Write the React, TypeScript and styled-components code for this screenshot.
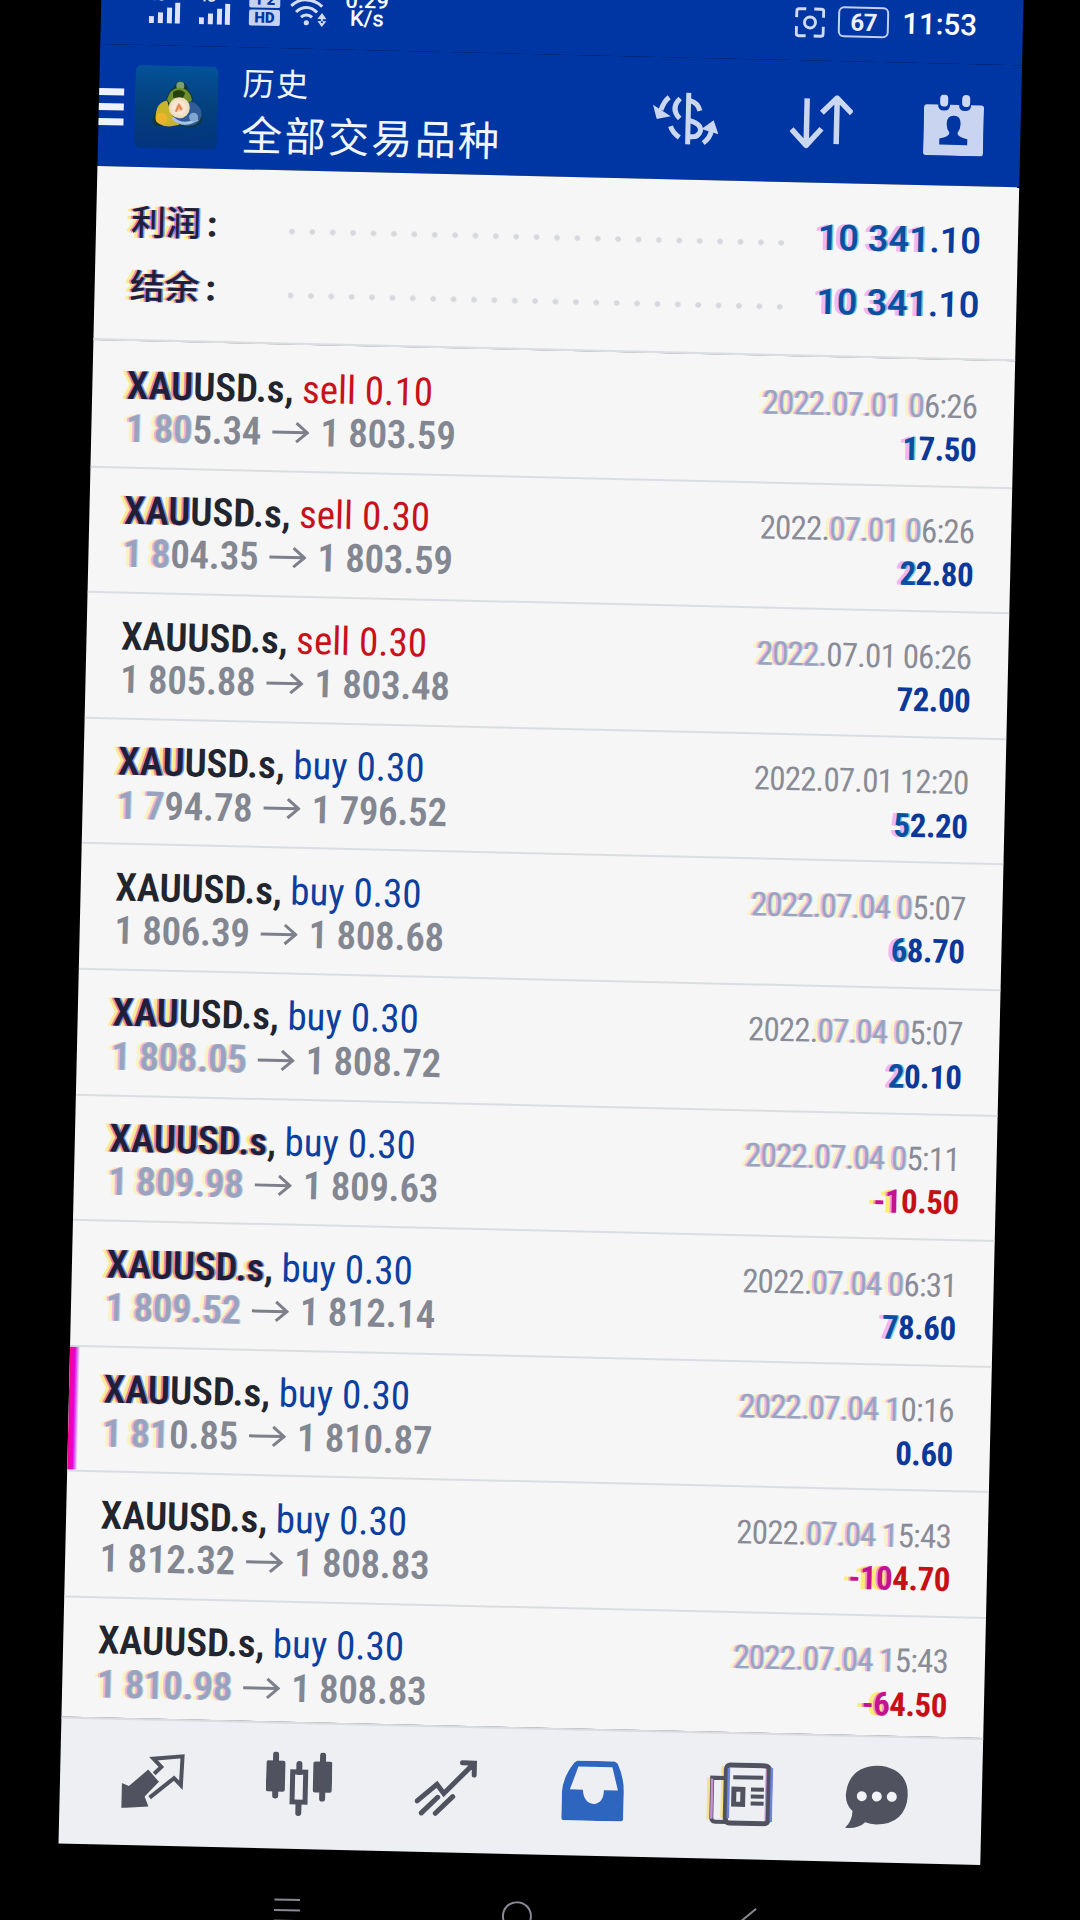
import React from "react";
import styled, { createGlobalStyle, css } from "styled-components";

const GlobalStyle = createGlobalStyle`
  * {
    box-sizing: border-box;
  }

  body {
    margin: 0;
    background: #000;
    font-family: Roboto, "Noto Sans CJK SC", sans-serif;
  }

  svg {
    display: block;
    flex: none;
  }
`;

const Page = styled.div`
  display: flex;
  width: 1080px;
  height: 1920px;
  overflow: hidden;
  background: #000;
`;

const Screen = styled.div`
  display: flex;
  flex-direction: column;
  flex: none;
  width: 922px;
  height: 2000px;
  margin: -30px 0 0 102.4px;
  transform: rotate(1.33deg);
  transform-origin: 0 0;
`;

const StatusBar = styled.div`
  display: flex;
  justify-content: space-between;
  align-items: flex-end;
  height: 74px;
  padding: 0 46px 22px 48px;
  background: #0036a3;
  color: #fff;
`;

const StatusGroup = styled.div<{ $gap: number }>`
  display: flex;
  align-items: flex-end;
  gap: ${(p) => p.$gap}px;
`;

const Signal = styled.div`
  display: flex;
  flex-direction: column;
  width: 32px;
  font-size: 13px;
  font-weight: 700;
  line-height: 11px;
  color: #e3e4fa;
`;

const VoiceBadge = styled.div`
  display: flex;
  flex-direction: column;
  gap: 2px;
  width: 31px;
`;

const VoiceCell = styled.span`
  height: 16px;
  border-radius: 2px;
  background: #c6d2f0;
  color: #0036a3;
  font-size: 15px;
  font-weight: 900;
  line-height: 16px;
  text-align: center;
`;

const Speed = styled.div`
  font-size: 22px;
  font-weight: 500;
  line-height: 18px;
  text-align: center;
`;

const Battery = styled.div`
  display: flex;
  align-items: center;
  justify-content: center;
  width: 51px;
  height: 31px;
  margin-bottom: 2px;
  border: 2.5px solid #c3cff0;
  border-radius: 6px;
  color: #eceefd;
  font-size: 24px;
  font-weight: 700;
  letter-spacing: -0.5px;
`;

const Clock = styled.span`
  margin-bottom: 1px;
  font-size: 29.5px;
  font-weight: 500;
  line-height: 31px;
`;

const AppBar = styled.header`
  display: flex;
  align-items: center;
  height: 122px;
  padding-right: 37px;
  background: #0036a3;
  color: #f1f5ff;
`;

const MenuButton = styled.div`
  display: flex;
  flex-direction: column;
  gap: 8px;
  width: 25px;
  margin: 3px 11px 0 0;
`;

const MenuLine = styled.span`
  height: 7px;
  background: #eef2fc;
`;

const Titles = styled.div`
  display: flex;
  flex-direction: column;
  flex: 1;
  padding: 0 0 1px 24px;
  font-family: "Noto Sans CJK SC", sans-serif;
  font-weight: 400;
  white-space: nowrap;
`;

const Subtitle = styled.span`
  font-size: 32px;
  letter-spacing: 2px;
  line-height: 49px;
`;

const Title = styled.span`
  font-size: 41px;
  letter-spacing: 2.4px;
  line-height: 52px;
`;

const Actions = styled.div`
  display: flex;
  align-items: center;
  gap: 71px;
`;

const Summary = styled.section`
  height: 174px;
  padding: 23px 37px 0 35px;
  background: #f6f6f7;
  border-bottom: 2px solid #dadde3;
`;

const SummaryRow = styled.div`
  display: flex;
  align-items: center;
  height: 64px;
`;

const SummaryLabel = styled.span`
  width: 158px;
  padding-bottom: 5px;
  color: #23252f;
  font-family: "Noto Sans CJK SC", sans-serif;
  font-size: 35px;
  font-weight: 500;
`;

const Colon = styled.b`
  padding-left: 6px;
  font-family: Roboto, sans-serif;
  font-weight: 900;
`;

const Dots = styled.div`
  flex: none;
  width: 500px;
  height: 6px;
  margin-top: 11px;
  background: radial-gradient(circle at 3px 3px, #d6d8de 2.4px, transparent 3.2px) 0 0 / 20.4px 6px repeat-x;
`;

const Amount = styled.span`
  margin-left: auto;
  color: #0b3c9d;
  font-size: 36px;
  font-weight: 600;
  white-space: nowrap;
`;

const List = styled.main`
  flex: none;
  height: 1377px;
  overflow: hidden;
  background: #f6f6f7;
`;

const Deal = styled.article<{ $marked?: boolean }>`
  height: 125.6px;
  padding: 20.5px 37px 0 34.5px;
  border-bottom: 2px solid #dadde3;
  font-family: "Roboto Condensed", Roboto, sans-serif;
  font-stretch: 75%;

  &:first-child {
    height: 127.6px;
    padding-top: 22.5px;
  }

  ${(p) =>
    p.$marked &&
    css`
      background: linear-gradient(90deg, #f5008c 0, #e800d8 5px, #d45cf5 7px, transparent 10px);
    `}
`;

const Line = styled.div`
  display: flex;
  align-items: baseline;
  height: 43.4px;
  font-size: 39px;
  line-height: 44px;
  white-space: pre;
`;

const Symbol = styled.span`
  color: #22252d;
  font-weight: 600;
  letter-spacing: -0.1px;
`;

const Side = styled.span<{ $sell: boolean }>`
  padding-left: 8.5px;
  color: ${(p) => (p.$sell ? "#c9111c" : "#0c3f9f")};
`;

const Price = styled.span`
  color: #838792;
  font-weight: 600;
  letter-spacing: -0.3px;
`;

const Time = styled.span`
  margin-left: auto;
  color: #898c96;
  font-size: 33px;
  letter-spacing: -0.85px;
`;

const Profit = styled.span<{ $loss: boolean }>`
  margin-left: auto;
  color: ${(p) => (p.$loss ? "#c60f16" : "#0b3899")};
  font-size: 33px;
  font-weight: 700;
  letter-spacing: -0.5px;
`;

const ArrowBox = styled.span`
  display: flex;
  align-self: center;
  padding: 0 11px 0 10px;
`;

// colour fringe that trails to the left of a run of characters
const fringes = {
  dark: css`
    color: #1f2038;
    text-shadow: 1.5px 0 rgba(30, 90, 230, 0.6), -2px 0 rgba(225, 30, 190, 0.5), -5px 0 rgba(255, 225, 40, 0.5);
  `,
  grey: css`
    color: #9aa3bd;
    text-shadow: 1px 0 rgba(120, 200, 225, 0.5), -2px 0 rgba(235, 140, 235, 0.6), -5px 0 rgba(255, 240, 120, 0.45);
  `,
  blue: css`
    color: #0c4fa0;
    text-shadow: 1.5px 0 rgba(0, 160, 180, 0.55), -4px 0 rgba(240, 140, 240, 0.6);
  `,
  red: css`
    color: #c4148c;
    text-shadow: -2px 0 rgba(240, 60, 200, 0.5), -6px 0 rgba(255, 230, 30, 0.6);
  `,
};

type Tone = keyof typeof fringes;

const Fringe = styled.span<{ $tone: Tone }>`
  ${(p) => fringes[p.$tone]}
`;

const TabBar = styled.nav`
  display: flex;
  flex: none;
  height: 126.5px;
  padding-left: 18.5px;
  background: #edeff3;
  border-top: 2px solid #d9dce0;
`;

const Tab = styled.div<{ $active?: boolean }>`
  display: flex;
  align-items: center;
  justify-content: center;
  width: 147px;
  padding-bottom: 4px;
  color: ${(p) => (p.$active ? "#2e66bf" : "#50535f")};

  &:last-child {
    width: 125px;
  }
`;

const SystemNav = styled.div`
  display: flex;
  gap: 202px;
  padding: 47px 0 0 217px;
  color: #8b8794;
`;

interface FringedProps {
  text: string;
  range: [number, number];
  tone: Tone;
}

const Fringed = ({ text, range: [from, to], tone }: FringedProps) => (
  <>
    {text.slice(0, from)}
    {to > from && <Fringe $tone={tone}>{text.slice(from, to)}</Fringe>}
    {text.slice(to)}
  </>
);

const SignalIcon = () => (
  <Signal>
    4G
    <svg width="32" height="22" viewBox="0 0 32 22" fill="#dfe2fa">
      <rect x="0" y="15" width="5" height="7" />
      <rect x="9" y="11" width="5" height="11" />
      <rect x="18" y="6" width="5" height="16" />
      <rect x="26" y="1" width="5" height="21" />
    </svg>
  </Signal>
);

const WifiIcon = () => (
  <svg width="37" height="30" viewBox="0 0 37 30" fill="none" stroke="#d4ddf6" strokeWidth="3">
    <path d="M1 9.5C9 1 23 1 32 9.5M6 15.5C12 9 21 9 27 15.5M11 20.500C14 17.500 19 17.500 22 20.500" />
    <circle cx="16.500" cy="26" r="2.600" fill="#d4ddf6" stroke="none" />
    <path d="M27.500 22l4.500-6 4.500 6zM27.500 24l4.500 6 4.500-6zM31 20h2v6h-2z" fill="#d4ddf6" stroke="none" />
  </svg>
);

const CaptureIcon = () => (
  <svg width="30" height="32" viewBox="0 -1 30 32" fill="none" stroke="#d0daf5" strokeWidth="3">
    <path d="M1.500 10V4Q1.500 1.500 4 1.500H11M19 1.500h7q2.500 0 2.500 2.500v6M28.500 19v7q0 2.500-2.500 2.500h-7M11 28.500H4q-2.500 0-2.500-2.500V19" />
    <circle cx="15" cy="15" r="5.500" />
  </svg>
);

const Logo = () => (
  <svg width="83" height="83" viewBox="0 0 83 83">
    <defs>
      <linearGradient id="tile" x1="0" y1="0" x2="0" y2="1">
        <stop offset="0" stopColor="#04529a" />
        <stop offset="0.5" stopColor="#04407c" />
        <stop offset="1" stopColor="#02347f" />
      </linearGradient>
      <radialGradient id="coin">
        <stop offset="0" stopColor="#f0a860" />
        <stop offset="0.45" stopColor="#fbe9dc" />
        <stop offset="1" stopColor="#e9d9b4" />
      </radialGradient>
    </defs>
    <rect width="83" height="83" rx="6" fill="url(#tile)" />
    <path d="M18 56q0-12 12-16 2-14 8-18 3-7 9-6 6 2 6 8 6 6 5 15 9 6 10 14-2 8-14 8l-15-4-14 4q-7 0-7-5z" fill="#12363f" />
    <circle cx="45" cy="20" r="4" fill="#7ba06a" />
    <path d="M32 34q3-12 13-12 10 1 12 12l-5 6H36z" fill="#6f8f2c" />
    <path d="M38 26q7-4 12 1l-2 5H38z" fill="#24420f" />
    <path d="M21 52q0-15 11-17l5 14 8 10-10 2q-12 0-14-9z" fill="#c9b42c" />
    <circle cx="27" cy="53" r="6" fill="#eab52a" />
    <path d="M55 35q11 3 12 13-1 11-13 12-9 0-14-8z" fill="#315d96" />
    <path d="M38 52q10 10 25 1" stroke="#a9c4e6" strokeWidth="3" fill="none" />
    <circle cx="59" cy="51" r="4.500" fill="#7fa6d2" />
    <circle cx="44.500" cy="42" r="10.500" fill="url(#coin)" />
    <path d="M41 46l3-7 3 5" stroke="#df8655" strokeWidth="2" fill="none" />
  </svg>
);

const CurrencyIcon = () => (
  <svg width="66" height="52" viewBox="0 0 66 52" fill="none" stroke="#cbd6f1" strokeWidth="5">
    <path d="M35.500 0v52" />
    <path d="M27 6q-10 10 0 20M37 8q8 2 10 10" />
    <path d="M18 34q2 6 9 11M37 28q12 3 11 10-2 7-11 6" />
    <path d="M16 5Q11 9 8 18" />
    <path d="M0 13l4 14 14-3z" fill="#cbd6f1" stroke="none" />
    <path d="M51 50q7-5 8-13" />
    <path d="M49 36l12-9 5 14z" fill="#cbd6f1" stroke="none" />
  </svg>
);

const SortIcon = () => (
  <svg width="63" height="54" viewBox="0 0 63 54" fill="none" stroke="#cbd6f1" strokeWidth="5.500" strokeLinejoin="round">
    <path d="M17 4v45M2 35l15 16 15-17M47 49V4M32 18L47 3l15 15" />
  </svg>
);

const CalendarIcon = () => (
  <svg width="60" height="61" viewBox="0 0 60 61">
    <path d="M3 10h11q0 6 6 6t6-6h9q0 6 6 6t6-6h10q3 0 3 3v45q0 3-3 3H3q-3 0-3-3V13q0-3 3-3z" fill="#c8d4f0" />
    <rect x="16" y="0" width="8" height="12" rx="4" fill="#cdd8f2" />
    <rect x="38" y="0" width="8" height="12" rx="4" fill="#cdd8f2" />
    <path d="M30 21q7 0 7 8 0 5-3 9 0 4 10 6v6H16v-6q10-2 10-6-3-4-3-9 0-8 7-8z" fill="#0036a3" />
  </svg>
);

const PriceArrow = () => (
  <svg width="38" height="22" viewBox="0 0 38 22" fill="none" stroke="#7d808b" strokeWidth="3">
    <path d="M1 11h34M25 1.500l11 9.500-11 9.500" />
  </svg>
);

const QuotesIcon = () => (
  <svg width="66" height="56" viewBox="0 0 66 56">
    <path d="M31 45l24-20 7 7 1-29-29 3 8 8-7 7" fill="none" stroke="currentColor" strokeWidth="4" />
    <path d="M29 17l11 12-14 15 4 10-27 2V31l7 3z" fill="currentColor" />
  </svg>
);

const CandlesIcon = () => (
  <svg width="66" height="64" viewBox="0 0 66 64">
    <g fill="currentColor">
      <rect x="0" y="9" width="19" height="31" rx="2" />
      <rect x="6.500" y="0" width="6" height="47" rx="3" />
      <rect x="47" y="9" width="19" height="31" rx="2" />
      <rect x="53.500" y="0" width="6" height="49" rx="3" />
      <rect x="30" y="9" width="6" height="14" rx="3" />
      <rect x="30" y="48" width="6" height="16" rx="3" />
    </g>
    <rect x="26.500" y="20" width="13" height="30" fill="none" stroke="currentColor" strokeWidth="5" />
  </svg>
);

const TrendIcon = () => (
  <svg width="62" height="57" viewBox="0 0 62 57" fill="none" stroke="currentColor" strokeWidth="5" strokeLinecap="round">
    <path d="M2.500 42L22 25l7 9L58 4M47 3h12v12M7 54l16-16M21 54l17-17" />
  </svg>
);

const InboxIcon = () => (
  <svg width="62" height="60" viewBox="0 0 62 60">
    <path
      d="M15 0h37l3 2q7 14 7 30v25q0 3-3 3H3q-3 0-3-3V32Q1 16 12 2zM16 6L8 29h13q1 13 11 14 10-1 10-14h14L50 6z"
      fill="currentColor"
      fillRule="evenodd"
    />
  </svg>
);

const NewsIcon = () => (
  <svg width="66" height="64" viewBox="0 0 66 64" fill="none">
    <path d="M1.500 16v42M15.500 4v52" stroke="#f7e08a" strokeWidth="3" />
    <path d="M17 16H5v40q0 4 4 4h12" stroke="currentColor" strokeWidth="4" />
    <path d="M5 17v40M59.500 6v53" stroke="#c98fd0" strokeWidth="2.500" />
    <rect x="19" y="3" width="43" height="58" rx="4" stroke="currentColor" strokeWidth="5" />
    <path d="M64.500 5v54M21.500 6v50" stroke="#6a83dc" strokeWidth="2.500" />
    <g stroke="currentColor">
      <path d="M26 15h30M44 27h13M44 34h13M44 41h13" strokeWidth="4" />
      <rect x="27" y="27" width="9" height="15" strokeWidth="5" />
    </g>
  </svg>
);

const ChatIcon = () => (
  <svg width="63" height="64" viewBox="0 0 63 64">
    <path d="M32 0q31 2 31 30-2 28-31 29-6 0-11-2Q14 64 1 63q7-7 7-17Q1 40 1 30 3 2 32 0z" fill="currentColor" />
    <g fill="#f2f3f6">
      <circle cx="17" cy="31" r="5" />
      <circle cx="32" cy="31" r="5" />
      <circle cx="47" cy="31" r="5" />
    </g>
  </svg>
);

interface DealData {
  side: "sell" | "buy";
  volume: string;
  open: string;
  close: string;
  time: string;
  profit: string;
  // fringed characters: symbol, open price, time (from, to), profit
  fringe: [number, number, number, number, number];
  marked?: boolean;
}

const deals: DealData[] = [
  { side: "sell", volume: "0.10", open: "1 805.34", close: "1 803.59", time: "2022.07.01 06:26", profit: "17.50", fringe: [3, 4, 0, 12, 1] },
  { side: "sell", volume: "0.30", open: "1 804.35", close: "1 803.59", time: "2022.07.01 06:26", profit: "22.80", fringe: [3, 3, 5, 12, 1] },
  { side: "sell", volume: "0.30", open: "1 805.88", close: "1 803.48", time: "2022.07.01 06:26", profit: "72.00", fringe: [0, 0, 0, 5, 0] },
  { side: "buy", volume: "0.30", open: "1 794.78", close: "1 796.52", time: "2022.07.01 12:20", profit: "52.20", fringe: [3, 3, 0, 0, 1] },
  { side: "buy", volume: "0.30", open: "1 806.39", close: "1 808.68", time: "2022.07.04 05:07", profit: "68.70", fringe: [0, 0, 0, 12, 1] },
  { side: "buy", volume: "0.30", open: "1 808.05", close: "1 808.72", time: "2022.07.04 05:07", profit: "20.10", fringe: [3, 8, 5, 12, 1] },
  { side: "buy", volume: "0.30", open: "1 809.98", close: "1 809.63", time: "2022.07.04 05:11", profit: "-10.50", fringe: [8, 8, 0, 12, 2] },
  { side: "buy", volume: "0.30", open: "1 809.52", close: "1 812.14", time: "2022.07.04 06:31", profit: "78.60", fringe: [8, 8, 5, 12, 1] },
  { side: "buy", volume: "0.30", open: "1 810.85", close: "1 810.87", time: "2022.07.04 10:16", profit: "0.60", fringe: [3, 4, 0, 12, 0], marked: true },
  { side: "buy", volume: "0.30", open: "1 812.32", close: "1 808.83", time: "2022.07.04 15:43", profit: "-104.70", fringe: [0, 0, 5, 12, 3] },
  { side: "buy", volume: "0.30", open: "1 810.98", close: "1 808.83", time: "2022.07.04 15:43", profit: "-64.50", fringe: [0, 8, 0, 12, 2] },
];

const DealRow = ({ deal }: { deal: DealData }) => {
  const [symbol, open, timeFrom, timeTo, profit] = deal.fringe;
  const loss = deal.profit.startsWith("-");

  return (
    <Deal $marked={deal.marked}>
      <Line>
        <Symbol>
          <Fringed text="XAUUSD.s," range={[0, symbol]} tone="dark" />
        </Symbol>
        <Side $sell={deal.side === "sell"}>
          {deal.side} {deal.volume}
        </Side>
        <Time>
          <Fringed text={deal.time} range={[timeFrom, timeTo]} tone="grey" />
        </Time>
      </Line>
      <Line>
        <Price>
          <Fringed text={deal.open} range={[0, open]} tone="grey" />
        </Price>
        <ArrowBox>
          <PriceArrow />
        </ArrowBox>
        <Price>{deal.close}</Price>
        <Profit $loss={loss}>
          <Fringed text={deal.profit} range={[0, profit]} tone={loss ? "red" : "blue"} />
        </Profit>
      </Line>
    </Deal>
  );
};

const App = () => {
  return (
    <Page>
      <GlobalStyle />
      <Screen>
        <StatusBar>
          <StatusGroup $gap={18}>
            <SignalIcon />
            <SignalIcon />
            <StatusGroup $gap={10}>
              <VoiceBadge>
                <VoiceCell>1 2</VoiceCell>
                <VoiceCell>HD</VoiceCell>
              </VoiceBadge>
              <WifiIcon />
            </StatusGroup>
            <Speed>
              0.29
              <br />
              K/s
            </Speed>
          </StatusGroup>
          <StatusGroup $gap={13}>
            <CaptureIcon />
            <Battery>67</Battery>
            <Clock>11:53</Clock>
          </StatusGroup>
        </StatusBar>
        <AppBar>
          <MenuButton>
            <MenuLine />
            <MenuLine />
            <MenuLine />
          </MenuButton>
          <Logo />
          <Titles>
            <Subtitle>历史</Subtitle>
            <Title>全部交易品种</Title>
          </Titles>
          <Actions>
            <CurrencyIcon />
            <SortIcon />
            <CalendarIcon />
          </Actions>
        </AppBar>
        <Summary>
          {["利润", "结余"].map((label) => (
            <SummaryRow key={label}>
              <SummaryLabel>
                <Fringe $tone="dark">{label}</Fringe>
                <Colon>:</Colon>
              </SummaryLabel>
              <Dots />
              <Amount>
                <Fringed text="10 341.10" range={[0, 6]} tone="blue" />
              </Amount>
            </SummaryRow>
          ))}
        </Summary>
        <List>
          {deals.map((deal, i) => (
            <DealRow key={i} deal={deal} />
          ))}
        </List>
        <TabBar>
          <Tab>
            <QuotesIcon />
          </Tab>
          <Tab>
            <CandlesIcon />
          </Tab>
          <Tab>
            <TrendIcon />
          </Tab>
          <Tab $active>
            <InboxIcon />
          </Tab>
          <Tab>
            <NewsIcon />
          </Tab>
          <Tab>
            <ChatIcon />
          </Tab>
        </TabBar>
        <SystemNav>
          <svg width="26" height="26" viewBox="0 0 26 26" fill="none" stroke="currentColor" strokeWidth="2">
            <path d="M0 4h26M0 14.500h26M0 25h26" />
          </svg>
          <svg width="30" height="30" viewBox="0 0 30 30" fill="none" stroke="currentColor" strokeWidth="2">
            <circle cx="15" cy="15" r="14" />
          </svg>
          <svg width="24" height="30" viewBox="0 0 24 30" fill="none" stroke="currentColor" strokeWidth="2">
            <path d="M22 2L7 15l15 13" />
          </svg>
        </SystemNav>
      </Screen>
    </Page>
  );
};

export default App;
